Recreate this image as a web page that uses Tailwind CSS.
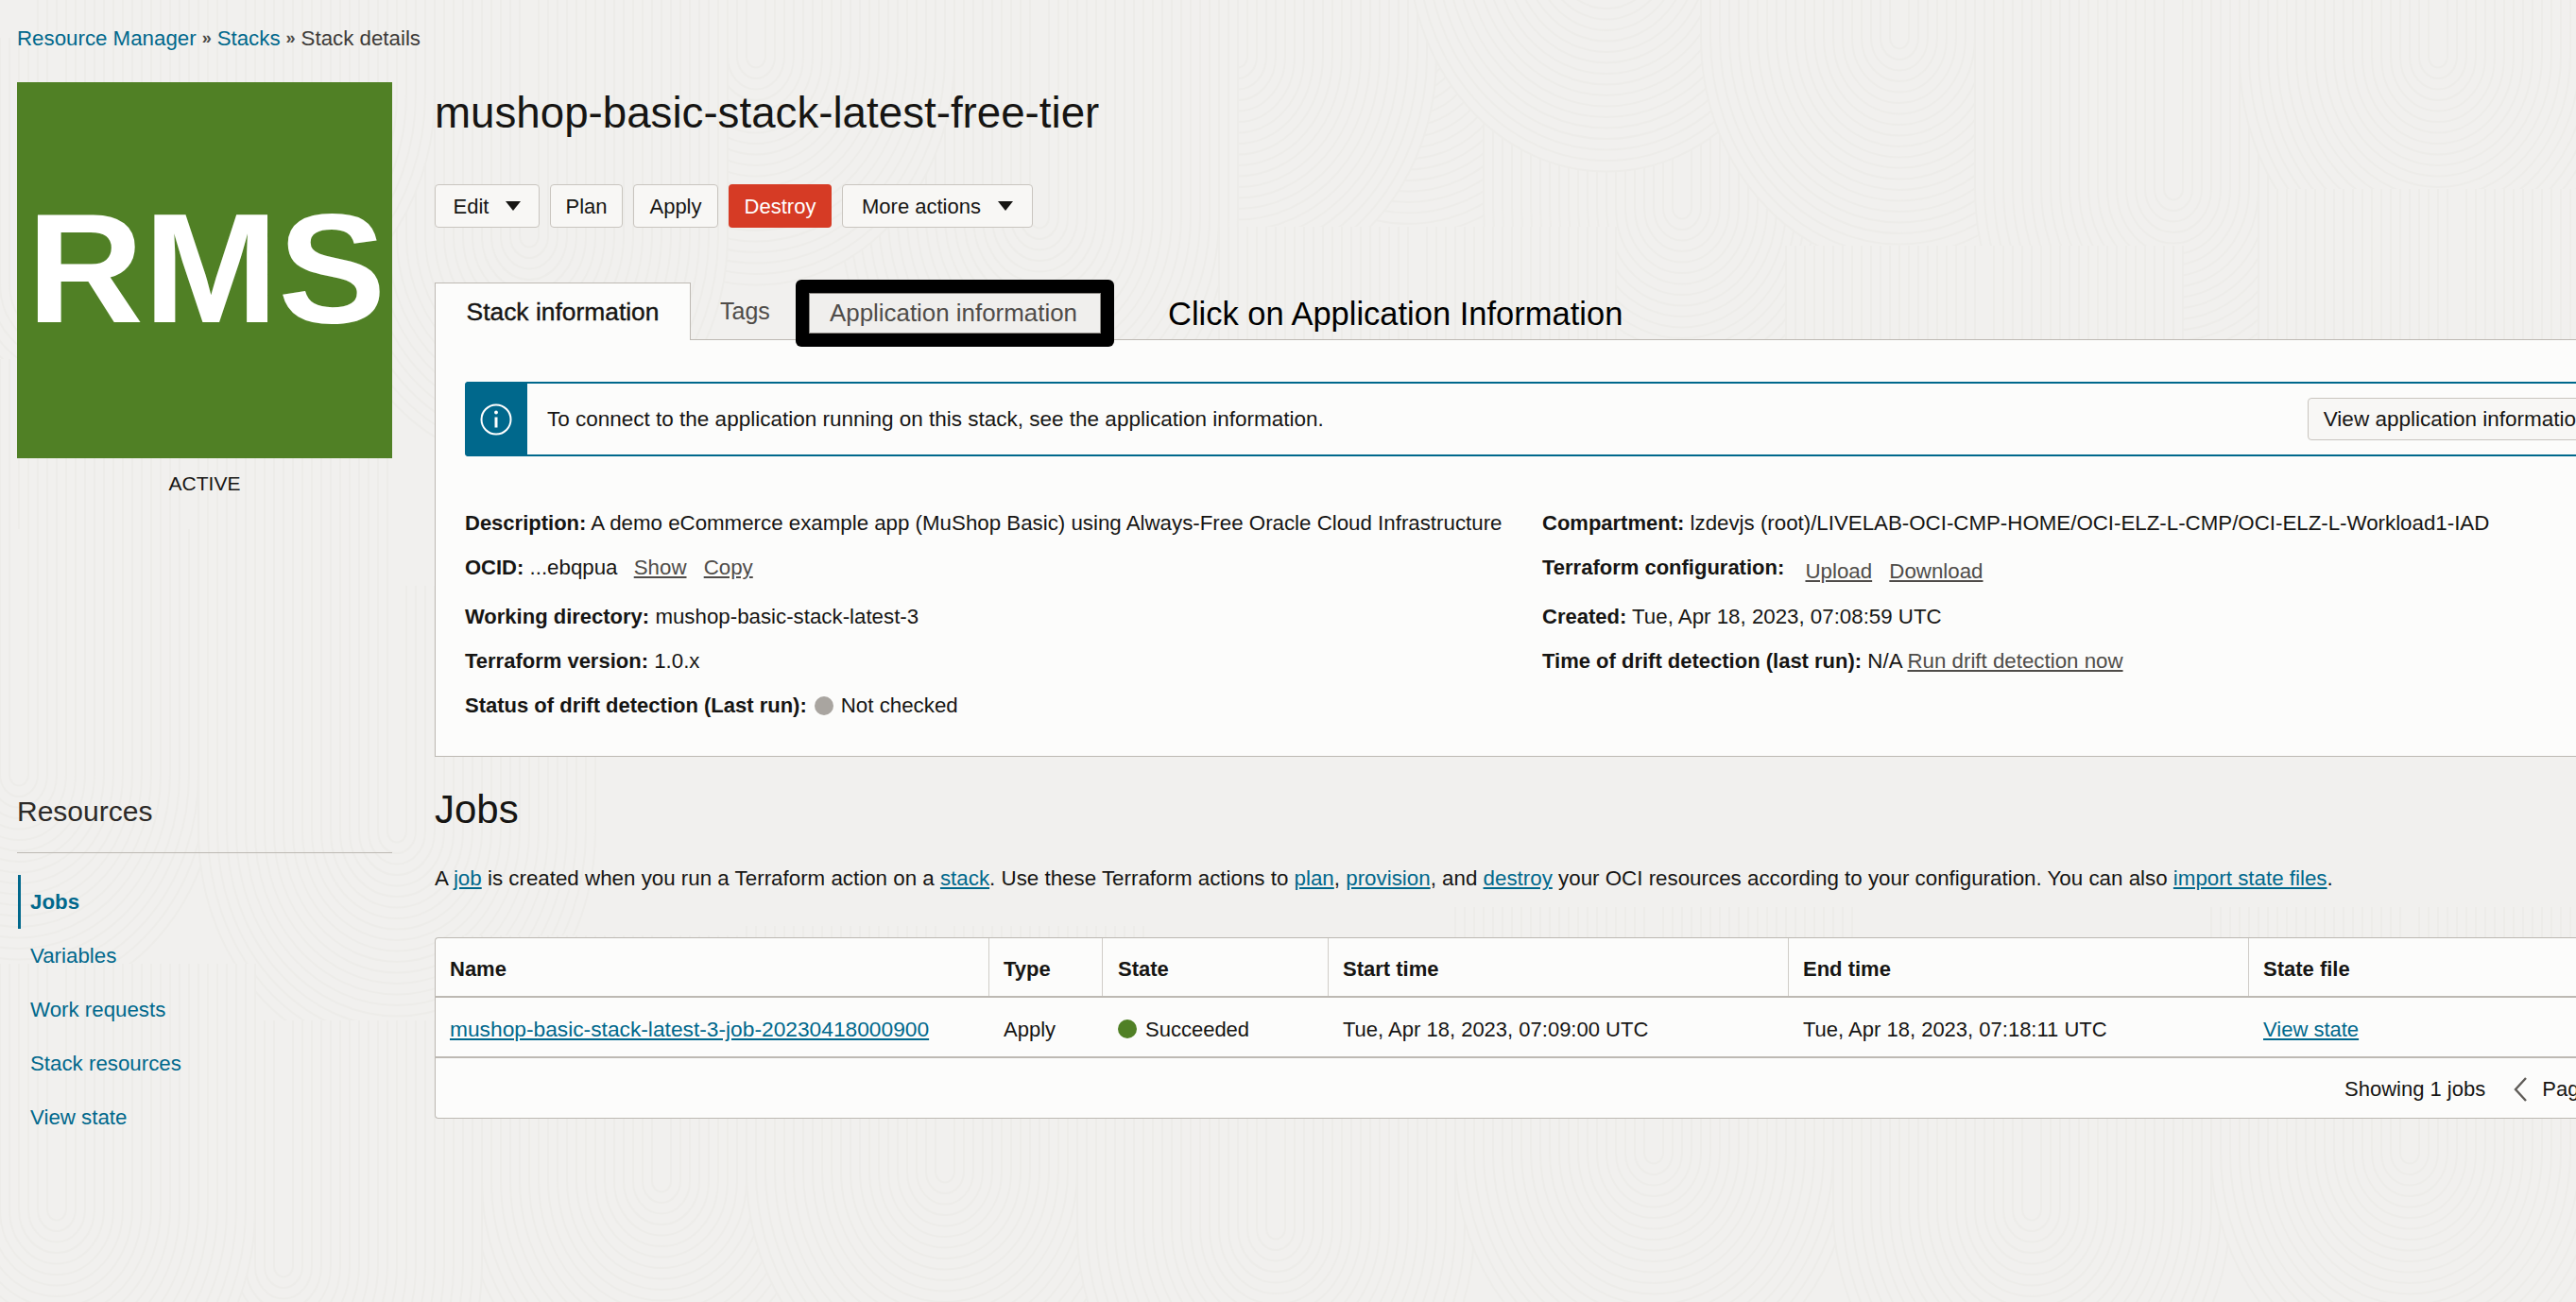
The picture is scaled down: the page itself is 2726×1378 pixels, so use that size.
<!DOCTYPE html>
<html lang="en">

<head>
    <meta charset="UTF-8">
    <meta name="viewport" content="width=device-width, initial-scale=1.0">
    <title>Stack details</title>
    <script src="https://cdn.jsdelivr.net/npm/@tailwindcss/browser@4"></script>
</head>

<body class="relative w-[2726px] h-[1378px] overflow-hidden bg-[#f1f0ee] font-['Liberation_Sans',Arial,sans-serif] text-[22.3px] text-[#161513]">

    <!-- background texture, filled in by the script at the bottom -->
    <svg id="texture" class="absolute inset-0 w-full h-full" xmlns="http://www.w3.org/2000/svg"></svg>

    <div class="relative">
        <!-- Breadcrumb -->
        <nav class="h-[81px] pl-[18px] flex items-center gap-[6px]">
            <a class="text-[#00688c]">Resource Manager</a>
            <span class="text-[18px] font-bold text-[#4a4845]">»</span>
            <a class="text-[#00688c]">Stacks</a>
            <span class="text-[18px] font-bold text-[#4a4845]">»</span>
            <span class="text-[#3d3b38]">Stack details</span>
        </nav>

        <div class="flex mt-[6px]">

            <!-- Left column -->
            <aside class="w-[460px] shrink-0 pl-[18px]">
                <div class="w-[397px] h-[398px] pb-[4px] bg-[#508025] flex items-center justify-center text-white font-bold text-[166px] leading-none">
                    <span class="inline-block ml-[4px] scale-x-[1.03]">RMS</span>
                </div>
                <div class="w-[397px] mt-[14px] h-[26px] text-center leading-[26px] text-[21px]">ACTIVE</div>

                <h2 class="mt-[312px] h-[44px] leading-[44px] text-[30px] font-light text-[#2c2a28]">Resources</h2>
                <div class="w-[397px] mt-[21px] border-t border-[#bdb9b3]"></div>

                <ul class="mt-[23px] ml-px text-[#00688c]">
                    <li class="h-[57px] border-l-[3px] border-[#00688c] pl-[10px] flex items-center font-bold">Jobs</li>
                    <li class="h-[57px] pl-[13px] flex items-center">Variables</li>
                    <li class="h-[57px] pl-[13px] flex items-center">Work requests</li>
                    <li class="h-[57px] pl-[13px] flex items-center">Stack resources</li>
                    <li class="h-[57px] pl-[13px] flex items-center">View state</li>
                </ul>
            </aside>

            <!-- Main column -->
            <main class="w-[2320px] shrink-0">
                <h1 class="h-[66px] leading-[66px] text-[45.7px]">mushop-basic-stack-latest-free-tier</h1>

                <!-- Action buttons -->
                <div class="mt-[42px] flex gap-[11px] h-[46px] text-[22px]">
                    <button class="w-[111px] flex items-center justify-center gap-[18px] bg-[#f8f7f5] border border-[#c9c5bf] rounded-[4px]">
                        Edit
                        <svg class="w-[16px] h-[10px]" viewBox="0 0 16 10"><path d="M0 0h16L8 10z" fill="#161513" /></svg>
                    </button>
                    <button class="w-[77px] bg-[#f8f7f5] border border-[#c9c5bf] rounded-[4px]">Plan</button>
                    <button class="w-[90px] bg-[#f8f7f5] border border-[#c9c5bf] rounded-[4px]">Apply</button>
                    <button class="w-[109px] bg-[#d63b25] text-white rounded-[4px]">Destroy</button>
                    <button class="w-[202px] flex items-center justify-center gap-[18px] bg-[#f8f7f5] border border-[#c9c5bf] rounded-[4px]">
                        More actions
                        <svg class="w-[16px] h-[10px]" viewBox="0 0 16 10"><path d="M0 0h16L8 10z" fill="#161513" /></svg>
                    </button>
                </div>

                <!-- Tabs -->
                <div class="relative mt-[58px] h-[61px] flex border-b border-[#bdb9b3]">
                    <div class="w-[271px] h-[61px] pt-[2px] bg-[#fcfcfb] border border-b-0 border-[#bdb9b3] flex items-center justify-center text-[26.4px] text-[#161513] [-webkit-text-stroke:0.4px_#161513]">Stack information</div>
                    <div class="pl-[31px] pt-[2px] flex items-center text-[25px] text-[#4f4c49]">Tags</div>

                    <!-- annotation over the third tab -->
                    <div class="absolute left-[382px] -top-[3px] w-[337px] h-[71px] bg-black rounded-[6px] p-[14px]">
                        <div class="h-full bg-[#f0efed] border border-[#8e8b87] flex items-center pl-[21px] text-[25.9px] text-[#4f4c49]">Application information</div>
                    </div>
                    <div class="absolute left-[776px] top-[3px] h-[61px] flex items-center text-[34.5px] text-black">Click on Application Information</div>
                </div>

                <!-- Stack information panel -->
                <section class="h-[441px] bg-[#fcfcfb] border-l border-b border-[#bdb9b3] pl-[31px] pt-[44px]">
                    <div class="h-[79px] flex items-stretch border-y-2 border-[#00688c] rounded-l-[4px]">
                        <div class="w-[66px] -my-[2px] bg-[#00688c] rounded-l-[4px] flex items-center justify-center">
                            <svg class="w-[34px] h-[34px]" viewBox="0 0 34 34" fill="none" stroke="#fff" stroke-width="2">
                                <circle cx="17" cy="17" r="15.5" />
                                <path d="M17 14.5v11" stroke-width="3" />
                                <circle cx="17" cy="9.5" r="1.9" fill="#fff" stroke="none" />
                            </svg>
                        </div>
                        <p class="pl-[21px] flex items-center text-[22.5px]">To connect to the application running on this stack, see the application information.</p>
                        <button class="ml-[1041px] my-[15px] w-[320px] shrink-0 bg-[#f8f7f5] border border-[#c9c5bf] rounded-[4px] text-left pl-[16px] text-[22.5px] whitespace-nowrap">View application information</button>
                    </div>

                    <div class="grid grid-cols-[1140px_1fr] mt-[58px] leading-[26px]">
                        <div class="flex flex-col">
                            <div class="h-[47px]"><b class="text-[22px]">Description:</b> A demo eCommerce example app (MuShop Basic) using Always-Free Oracle Cloud Infrastructure</div>
                            <div class="h-[52px]"><b class="text-[22px]">OCID:</b> ...ebqpua <a class="ml-[11px] underline text-[#4f4c49]">Show</a> <a class="ml-[12px] underline text-[#4f4c49]">Copy</a></div>
                            <div class="h-[47px]"><b class="text-[22px]">Working directory:</b> mushop-basic-stack-latest-3</div>
                            <div class="h-[47px]"><b class="text-[22px]">Terraform version:</b> 1.0.x</div>
                            <div class="flex items-center gap-[8px] h-[26px]"><b class="text-[22px]">Status of drift detection (Last run):</b><span class="w-[20px] h-[20px] rounded-full bg-[#a9a5a0]"></span><span>Not checked</span></div>
                        </div>
                        <div class="flex flex-col">
                            <div class="h-[47px]"><b class="text-[22px]">Compartment:</b> lzdevjs (root)/LIVELAB-OCI-CMP-HOME/OCI-ELZ-L-CMP/OCI-ELZ-L-Workload1-IAD</div>
                            <div class="h-[52px]"><b class="text-[22px]">Terraform configuration:</b> <a class="ml-[16px] relative top-[4px] underline text-[#4f4c49]">Upload</a> <a class="ml-[12px] relative top-[4px] underline text-[#4f4c49]">Download</a></div>
                            <div class="h-[47px]"><b class="text-[22px]">Created:</b> Tue, Apr 18, 2023, 07:08:59 UTC</div>
                            <div class="h-[47px]"><b class="text-[22px]">Time of drift detection (last run):</b> N/A <a class="underline text-[#4f4c49]">Run drift detection now</a></div>
                        </div>
                    </div>
                </section>

                <!-- Jobs -->
                <h2 class="mt-[26px] h-[60px] leading-[60px] text-[42px] text-[#161513]">Jobs</h2>
                <p class="mt-[23px] h-[40px] leading-[40px] text-[22.35px]">A <a class="underline text-[#00688c]">job</a> is created when you run a Terraform action on a <a class="underline text-[#00688c]">stack</a>. Use these Terraform actions to <a class="underline text-[#00688c]">plan</a>, <a class="underline text-[#00688c]">provision</a>, and <a class="underline text-[#00688c]">destroy</a> your OCI resources according to your configuration. You can also <a class="underline text-[#00688c]">import state files</a>.</p>

                <!-- Jobs table -->
                <div class="mt-[42px] h-[192px] text-[22px] bg-[#fcfcfb] border-y border-l border-[#bdb9b3] rounded-l-[4px]">
                    <div class="grid grid-cols-[585px_120px_239px_487px_487px_1fr] h-[63px] pt-[4px] font-bold border-b-2 border-[#bdb9b3]">
                        <div class="pl-[15px] flex items-center">Name</div>
                        <div class="pl-[15px] flex items-center border-l border-[#d0cdc8] -mt-[4px] pt-[4px]">Type</div>
                        <div class="pl-[16px] flex items-center border-l border-[#d0cdc8] -mt-[4px] pt-[4px]">State</div>
                        <div class="pl-[15px] flex items-center border-l border-[#d0cdc8] -mt-[4px] pt-[4px]">Start time</div>
                        <div class="pl-[15px] flex items-center border-l border-[#d0cdc8] -mt-[4px] pt-[4px]">End time</div>
                        <div class="pl-[15px] flex items-center border-l border-[#d0cdc8] -mt-[4px] pt-[4px]">State file</div>
                    </div>
                    <div class="grid grid-cols-[585px_120px_239px_487px_487px_1fr] h-[64px] pt-[4px] border-b-2 border-[#bdb9b3]">
                        <div class="pl-[15px] flex items-center"><a class="underline text-[#00688c] text-[22.75px]">mushop-basic-stack-latest-3-job-20230418000900</a></div>
                        <div class="pl-[16px] flex items-center">Apply</div>
                        <div class="pl-[17px] flex items-center gap-[9px]"><span class="w-[20px] h-[20px] rounded-full bg-[#508025]"></span>Succeeded</div>
                        <div class="pl-[16px] flex items-center">Tue, Apr 18, 2023, 07:09:00 UTC</div>
                        <div class="pl-[16px] flex items-center">Tue, Apr 18, 2023, 07:18:11 UTC</div>
                        <div class="pl-[16px] flex items-center"><a class="underline text-[#00688c]">View state</a></div>
                    </div>
                    <div class="h-[63px] pt-[2px] flex items-center pl-[2020px] whitespace-nowrap">
                        <span>Showing 1 jobs</span>
                        <svg class="ml-[30px] w-[14px] h-[26px]" viewBox="0 0 14 26" fill="none" stroke="#5f5c58" stroke-width="2.4"><path d="M13 1 2 13l11 12" /></svg>
                        <span class="ml-[16px]">Page 1</span>
                    </div>
                </div>
            </main>
        </div>
    </div>

    <script>
        // nested U shapes, later ones cover earlier ones like the fingerprint texture
        const nests = [
            [1490, 30], [1780, 220], [1310, 60], [1700, -60], [2010, 40], [2300, 200], [2580, 60], [1100, 230],
            [800, 60], [560, 250], [250, 100], [60, 300], [1500, 500], [2100, 520], [2600, 460], [200, 640],
            [20, 820], [420, 880], [700, 1250], [300, 1340], [60, 1280], [1000, 1240], [1350, 1300], [1750, 1220], [2150, 1280], [2550, 1220]
        ];
        let marks = '';
        for (const [cx, cy] of nests) {
            for (let r = 210; r > 4; r -= 10) {
                const ry = r * 1.15;
                marks += `<path d="M${cx - r} ${cy - 260}V${cy}A${r} ${ry} 0 0 0 ${cx + r} ${cy}V${cy - 260}" fill="#f1f0ee" stroke="#edecE9" stroke-width="2" />`;
            }
        }
        document.getElementById('texture').innerHTML = marks;
    </script>

</body>

</html>
